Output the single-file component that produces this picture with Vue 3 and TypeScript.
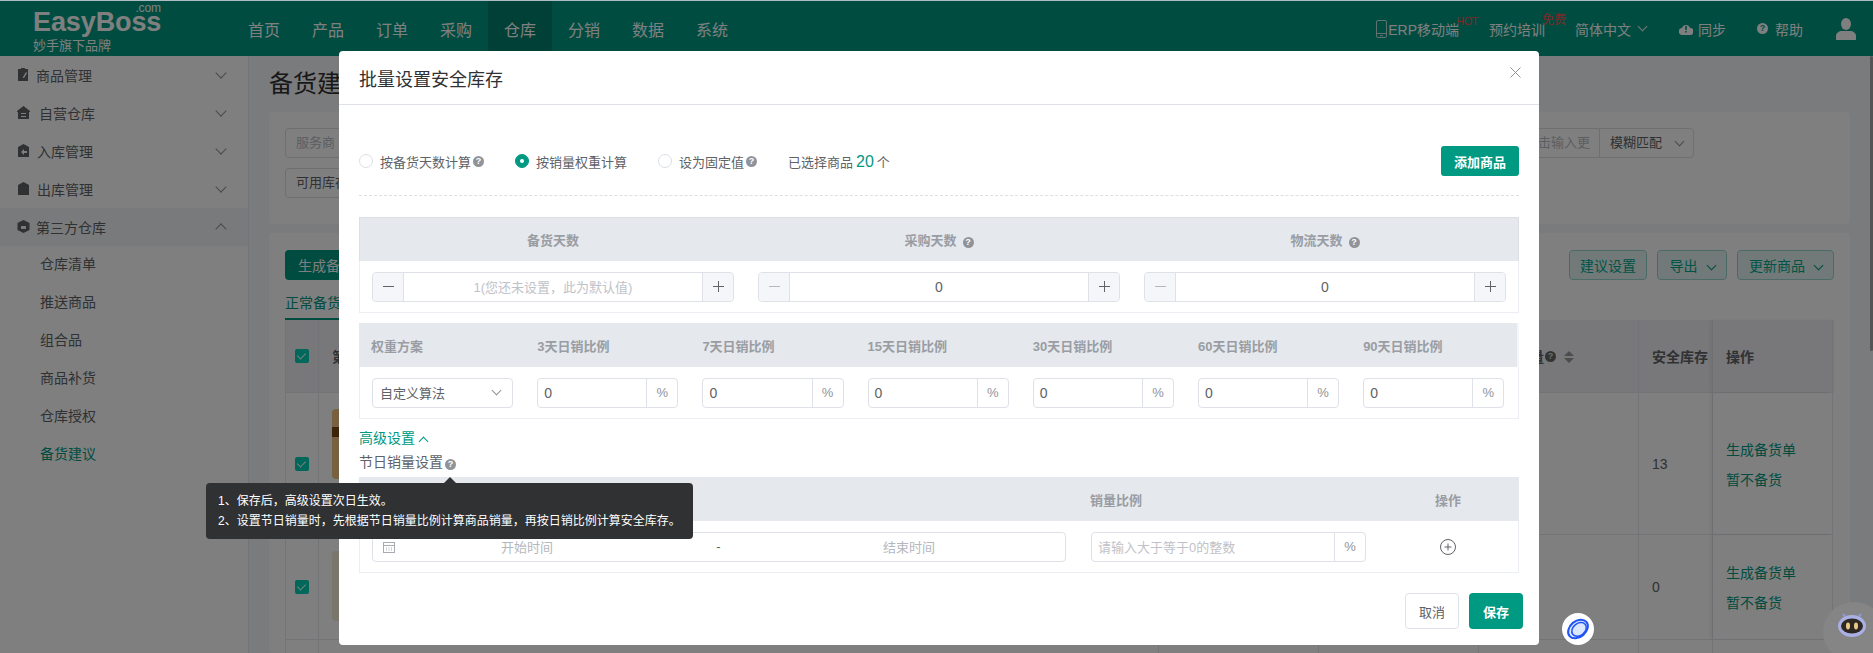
<template>
  <div class="page">
    <!-- 顶部导航 -->
    <header class="topbar">
      <div class="logo">
        <div class="logo-name">EasyBoss<span class="logo-com">.com</span></div>
        <div class="logo-sub">妙手旗下品牌</div>
      </div>
      <nav class="nav">
        <a v-for="item in navItems" :key="item" :class="['nav-item', { active: item === '仓库' }]">{{ item }}</a>
      </nav>
      <div class="top-right">
        <span class="top-link erp">
          <svg width="11" height="18" viewBox="0 0 11 18" fill="none" stroke="currentColor" stroke-opacity="0.75">
            <rect x="0.5" y="0.5" width="10" height="17" rx="1.5" />
            <path d="M1 13.5h9M4 15.7h3" />
          </svg>
          <span>ERP移动端</span>
          <i class="tag hot">HOT</i>
        </span>
        <span class="top-link train">预约培训<i class="tag free">免费</i></span>
        <span class="top-link lang">简体中文<span class="chev light"></span></span>
        <span class="top-link sync">
          <svg width="14" height="12" viewBox="0 0 14 12">
            <path fill="currentColor" d="M3.5 12A3.5 3.5 0 0 1 3 5a4.2 4.2 0 0 1 8 0 3.5 3.5 0 0 1 0 7z" />
            <path fill="#00997f" d="M6.2 3h1.6v4H6.2zM6.2 8h1.6v1.6H6.2z" />
          </svg>
          同步
        </span>
        <span class="top-link help">
          <i class="round-hint">?</i>
          帮助
        </span>
        <svg class="avatar" width="20" height="22" viewBox="0 0 20 22">
          <ellipse cx="10" cy="6" rx="5" ry="6" fill="currentColor" />
          <path fill="currentColor" d="M0 22v-4c0-3 3-5 6-5h8c3 0 6 2 6 5v4z" />
        </svg>
      </div>
    </header>

    <div class="layout">
      <!-- 左侧菜单 -->
      <aside class="sidebar">
        <div v-for="menu in menus" :key="menu.name" :class="['menu-row', { open: menu.open }]">
          <svg class="menu-icon" width="13" height="13" viewBox="0 0 13 13">
            <path fill="currentColor" :d="menu.icon" />
          </svg>
          <span :style="{ marginLeft: menu.offset + 'px' }">{{ menu.name }}</span>
          <span :class="['chev', 'menu-chev', { up: menu.open }]"></span>
        </div>
        <div v-for="sub in subMenus" :key="sub" :class="['sub-row', { current: sub === '备货建议' }]">{{ sub }}</div>
      </aside>

      <!-- 背后的备货建议页面 -->
      <main class="main">
        <h1 class="page-title">备货建议</h1>
        <section class="card filter-card">
          <div class="filter-row">
            <div class="fake-input provider">服务商</div>
            <div class="fake-input keyword">双击输入更</div>
            <div class="fake-input match">模糊匹配<span class="chev"></span></div>
          </div>
          <div class="filter-row">
            <div class="fake-input stock">可用库存</div>
          </div>
        </section>
        <section class="card list-card">
          <div class="toolbar">
            <button class="btn-primary-dark">生成备货单</button>
            <div class="toolbar-right">
              <button class="btn-plain w78">建议设置</button>
              <button class="btn-plain w70">导出<span class="chev green"></span></button>
              <button class="btn-plain w97">更新商品<span class="chev green"></span></button>
            </div>
          </div>
          <div class="tabs"><span class="tab">正常备货</span></div>
          <div class="grid-head grid-row">
            <div class="cell"><span class="check"></span></div>
            <div class="cell">第三方</div>
            <div class="cell"></div>
            <div class="cell"></div>
            <div class="cell end">销量<i class="round-hint dark">?</i><span class="sort"></span></div>
            <div class="cell nowrap">安全库存<span class="sort"></span></div>
            <div class="cell action">操作</div>
          </div>
          <div v-for="row in stockRows" :key="row.safe" class="grid-row body-row" :style="{ height: row.height + 'px' }">
            <div class="cell"><span class="check"></span></div>
            <div class="cell product">
              <div :class="['thumb', row.thumb]"></div>
            </div>
            <div class="cell"></div>
            <div class="cell"></div>
            <div class="cell"></div>
            <div class="cell">{{ row.safe }}</div>
            <div class="cell action links">
              <a>生成备货单</a>
              <a>暂不备货</a>
            </div>
          </div>
          <div class="grid-row body-row">
            <div class="cell" v-for="n in 7" :key="n"></div>
          </div>
        </section>
      </main>
    </div>

    <div class="scroll-thumb"></div>

    <!-- 批量设置弹窗 -->
    <div class="overlay">
      <div class="dialog">
        <div class="dialog-header">
          <span>批量设置安全库存</span>
          <svg class="close" width="11" height="11" viewBox="0 0 11 11" fill="none" stroke="currentColor">
            <path d="M.5.5l10 10M10.5.5l-10 10" />
          </svg>
        </div>

        <div class="dialog-body">
          <div class="mode-row">
            <label v-for="mode in modes" :key="mode.label" class="radio">
              <span :class="['radio-dot', { checked: mode.label === currentMode }]"></span>
              <span class="radio-text">{{ mode.label }}</span>
              <i v-if="mode.hint" class="hint">?</i>
            </label>
            <span class="selected">已选择商品<em>20</em>个</span>
            <button class="btn-primary add-btn">添加商品</button>
          </div>

          <div class="block days-block">
            <div class="block-head days-grid">
              <div v-for="col in dayCols" :key="col.title" class="head-cell center">
                {{ col.title }}<i v-if="col.hint" class="hint spaced">?</i>
              </div>
            </div>
            <div class="block-row days-grid">
              <div v-for="col in dayCols" :key="col.title" class="body-cell">
                <div class="stepper">
                  <span :class="['step', { muted: col.muted }]">
                    <svg width="11" height="11" viewBox="0 0 11 11" stroke="currentColor"><path d="M0 5.5h11" /></svg>
                  </span>
                  <span :class="['step-value', { placeholder: col.placeholder }]">{{ col.value }}</span>
                  <span class="step">
                    <svg width="11" height="11" viewBox="0 0 11 11" stroke="currentColor"><path d="M0 5.5h11M5.5 0v11" /></svg>
                  </span>
                </div>
              </div>
            </div>
          </div>

          <div class="block ratio-block">
            <div class="block-head ratio-grid ratio-head">
              <div v-for="col in ratioCols" :key="col" class="head-cell">{{ col }}</div>
            </div>
            <div class="block-row ratio-grid">
              <div class="body-cell">
                <div class="select">自定义算法<span class="chev"></span></div>
              </div>
              <div v-for="col in ratioCols.slice(1)" :key="col" class="body-cell">
                <div class="percent-input">
                  <span class="percent-value">0</span>
                  <span class="percent-unit">%</span>
                </div>
              </div>
            </div>
          </div>

          <div class="advanced">高级设置<span class="chev up primary"></span></div>

          <div class="festival-title">
            节日销量设置<i class="hint">?</i>
            <div class="tooltip">
              <p>1、保存后，高级设置次日生效。</p>
              <p>2、设置节日销量时，先根据节日销量比例计算商品销量，再按日销比例计算安全库存。</p>
            </div>
          </div>

          <div class="block">
            <div class="block-head festival-grid">
              <div class="head-cell first"></div>
              <div class="head-cell">销量比例</div>
              <div class="head-cell center op">操作</div>
            </div>
            <div class="block-row festival-grid">
              <div class="body-cell first">
                <div class="date-range">
                  <svg width="12" height="12" viewBox="0 0 12 12" fill="none" stroke="currentColor">
                    <rect x="0.5" y="1.5" width="11" height="10" />
                    <path d="M.5 4.5h11M3 7h1M5.5 7h1M8 7h1M3 9h1M5.5 9h1M8 9h1" />
                  </svg>
                  <span class="date-field">开始时间</span>
                  <span class="date-sep">-</span>
                  <span class="date-field end-field">结束时间</span>
                </div>
              </div>
              <div class="body-cell flat">
                <div class="percent-input">
                  <span class="percent-value placeholder">请输入大于等于0的整数</span>
                  <span class="percent-unit">%</span>
                </div>
              </div>
              <div class="body-cell center op">
                <svg width="16" height="16" viewBox="0 0 16 16" fill="none" stroke="#606266">
                  <circle cx="8" cy="8" r="7.5" />
                  <path d="M8 4.5v7M4.5 8h7" />
                </svg>
              </div>
            </div>
          </div>
        </div>

        <div class="dialog-footer">
          <button class="btn-cancel">取消</button>
          <button class="btn-primary save-btn">保存</button>
        </div>
      </div>

      <!-- 悬浮按钮 -->
      <div class="float-logo">
        <svg width="24" height="24" viewBox="0 0 24 24" fill="#dbe6ff" stroke="#1f54f5" stroke-width="2">
          <ellipse cx="12" cy="12" rx="11" ry="8" transform="rotate(-40 12 12)" />
          <ellipse cx="12.5" cy="13" rx="8" ry="6" transform="rotate(-40 12 12)" fill="none" stroke-width="1.5" />
        </svg>
      </div>
      <div class="float-bot">
        <svg width="30" height="24" viewBox="0 0 30 24">
          <circle cx="7" cy="2" r="1.5" fill="#8f97d8" />
          <circle cx="23" cy="2" r="1.5" fill="#8f97d8" />
          <ellipse cx="15" cy="13" rx="14" ry="11" fill="#aab0e4" />
          <ellipse cx="15" cy="13" rx="11" ry="7.5" fill="#2f2822" />
          <ellipse cx="11" cy="13" rx="2" ry="3.4" fill="#e8c98a" />
          <ellipse cx="19" cy="13" rx="2" ry="3.4" fill="#e8c98a" />
        </svg>
      </div>
    </div>
  </div>
</template>

<script setup lang="ts">
interface DayCol {
  title: string
  value: string
  hint?: boolean
  muted?: boolean
  placeholder?: boolean
}

const navItems = ['首页', '产品', '订单', '采购', '仓库', '分销', '数据', '系统']

const menus = [
  { name: '商品管理', offset: 0, open: false, icon: 'M1 1h3V0h4v1h3v12H1zM7 10l3-5-1-1-3 5v1z' },
  { name: '自营仓库', offset: 3, open: false, icon: 'M6.5 0L13 5v1h-1v7H1V6H0V5zM4 7v1h5V7zM4 10v1h5v-1z' },
  { name: '入库管理', offset: 1, open: false, icon: 'M6.5 0L12 3v10H1V3zM7 5L4 8l3 3V9h3V7H7z' },
  { name: '出库管理', offset: 1, open: false, icon: 'M6.5 0L12 3v10H1V3zM6 5l3 3-3 3V9H3V7h3z' },
  { name: '第三方仓库', offset: 0, open: true, icon: 'M6.5 0L12.5 3v7l-6 3-6-3V3zM4 6v3h5V6z' }
]

const subMenus = ['仓库清单', '推送商品', '组合品', '商品补货', '仓库授权', '备货建议']

const stockRows = [
  { safe: '13', height: 142, thumb: 'wood' },
  { safe: '0', height: 105, thumb: 'pale' }
]

const currentMode = '按销量权重计算'
const modes = [
  { label: '按备货天数计算', hint: true },
  { label: '按销量权重计算', hint: false },
  { label: '设为固定值', hint: true }
]

const dayCols: DayCol[] = [
  { title: '备货天数', value: '1(您还未设置，此为默认值)', placeholder: true },
  { title: '采购天数', value: '0', hint: true, muted: true },
  { title: '物流天数', value: '0', hint: true, muted: true }
]

const ratioCols = ['权重方案', '3天日销比例', '7天日销比例', '15天日销比例', '30天日销比例', '60天日销比例', '90天日销比例']
</script>

<style>
html,
body {
  margin: 0;
  background: #f6f7f9;
}
</style>

<style scoped>
.page {
  position: relative;
  width: 1873px;
  height: 653px;
  overflow: hidden;
  background: #f5f6f8;
  font-family: "Liberation Sans", "Noto Sans CJK SC", sans-serif;
  font-size: 14px;
  color: #606266;
}

p {
  margin: 0;
}

i,
em {
  font-style: normal;
}

button {
  font-family: inherit;
  cursor: pointer;
}

.chev {
  display: inline-block;
  width: 6px;
  height: 6px;
  border-right: 1px solid #909399;
  border-bottom: 1px solid #909399;
  transform: translateY(-2px) rotate(45deg);
}

.chev.up {
  transform: translateY(2px) rotate(225deg);
}

.chev.light {
  border-color: #e8f3f1;
  margin-left: 8px;
}

.chev.green {
  border-color: #00997f;
  margin-left: 10px;
}

.chev.primary {
  border-color: #009982;
  margin-left: 5px;
}

/* 顶部导航 */
.topbar {
  display: flex;
  align-items: center;
  height: 56px;
  box-sizing: border-box;
  border-top: 1px solid #aebcc4;
  background: #009982;
  color: #fff;
}

.logo {
  width: 248px;
  box-sizing: border-box;
  padding: 4px 0 0 33px;
  flex: none;
}

.logo-name {
  position: relative;
  width: 129px;
  font-size: 27px;
  line-height: 30px;
  font-weight: 700;
  letter-spacing: -0.1px;
  color: #fff;
}

.logo-com {
  position: absolute;
  right: 1px;
  top: -5px;
  font-size: 12px;
  line-height: 12px;
  font-weight: 400;
}

.logo-sub {
  font-size: 13px;
  line-height: 16px;
  margin-top: 1px;
}

.nav {
  display: flex;
  height: 100%;
}

.nav-item {
  display: flex;
  align-items: center;
  padding: 0 16px;
  margin-left: -16px;
  margin-right: 16px;
  font-size: 16px;
}

.nav-item.active {
  background: #00806d;
}

.top-right {
  display: flex;
  align-items: center;
  margin-left: auto;
  padding-right: 17px;
}

.top-link {
  position: relative;
  display: inline-flex;
  align-items: center;
}

.erp {
  gap: 1px;
  margin-right: 30px;
}

.train {
  margin-right: 30px;
}

.lang {
  margin-right: 33px;
}

.sync {
  gap: 5px;
  margin-right: 31px;
}

.help {
  gap: 7px;
  margin-right: 33px;
}

.tag {
  position: absolute;
  color: #ff4d4f;
  font-size: 12px;
  line-height: 12px;
}

.hot {
  right: -19px;
  top: -4px;
  font-size: 11px;
  letter-spacing: -0.5px;
}

.free {
  right: -21px;
  top: -5px;
}

.round-hint {
  display: inline-block;
  width: 11px;
  height: 11px;
  line-height: 11px;
  border-radius: 50%;
  background: #fff;
  color: #00997f;
  text-align: center;
  font-size: 9px;
  font-weight: 700;
}

.round-hint.dark {
  background: #666;
  color: #ddd;
  margin-left: 1px;
}

.avatar {
  color: #fff;
}

/* 左侧菜单 */
.layout {
  display: flex;
  height: 597px;
}

.sidebar {
  width: 248px;
  flex: none;
  background: #fff;
  border-right: 1px solid #e6e8ee;
}

.menu-row {
  display: flex;
  align-items: center;
  height: 38px;
  box-sizing: border-box;
  padding: 0 0 1px 17px;
  color: #606266;
}

.menu-row.open {
  background: #f3f4f7;
}

.menu-icon {
  margin-right: 6px;
  color: #606266;
}

.menu-chev {
  margin-left: auto;
  margin-right: 23px;
  width: 7px;
  height: 7px;
}

.sub-row {
  height: 38px;
  line-height: 37px;
  padding-left: 40px;
}

.sub-row.current {
  color: #009982;
}

/* 背后页面 */
.main {
  flex: 1;
  min-width: 0;
  padding: 0 23px 0 20px;
}

.page-title {
  margin: 0;
  height: 56px;
  line-height: 56px;
  font-size: 24px;
  font-weight: 400;
  color: #303133;
}

.card {
  background: #fff;
  border-radius: 4px;
  padding: 16px;
}

.filter-card {
  height: 112px;
  box-sizing: border-box;
  margin-bottom: 9px;
}

.filter-row {
  display: flex;
  margin-bottom: 10px;
}

.fake-input {
  height: 30px;
  box-sizing: border-box;
  border: 1px solid #dcdfe6;
  line-height: 28px;
  padding: 0 10px;
  border-radius: 4px;
  font-size: 13px;
  color: #b8bcc4;
}

.provider {
  width: 200px;
}

.stock {
  width: 200px;
  color: #606266;
}

.keyword {
  width: 160px;
  margin-left: auto;
  padding: 0 0 0 85px;
  border-radius: 4px 0 0 4px;
  border-right: 0;
  white-space: nowrap;
}

.match {
  display: flex;
  align-items: center;
  justify-content: space-between;
  width: 95px;
  margin-right: 140px;
  border-radius: 0 4px 4px 0;
  color: #606266;
}

.list-card {
  padding-top: 17px;
  padding-bottom: 0;
  height: 420px;
  box-sizing: border-box;
}

.toolbar {
  display: flex;
  justify-content: space-between;
  height: 30px;
  margin-bottom: 12px;
}

.toolbar-right {
  display: flex;
  gap: 10px;
}

.btn-primary-dark {
  width: 96px;
  height: 30px;
  border: 0;
  border-radius: 4px;
  background: #009982;
  color: #fff;
  font-size: 14px;
}

.btn-plain {
  height: 30px;
  border: 1px solid #99d6cd;
  border-radius: 4px;
  background: #e2f4f1;
  color: #00a88f;
  font-size: 14px;
  padding: 0;
}

.w78 {
  width: 78px;
}

.w70 {
  width: 70px;
}

.w97 {
  width: 97px;
}

.tabs {
  height: 28px;
}

.tab {
  display: inline-block;
  width: 70px;
  height: 28px;
  box-sizing: border-box;
  border-bottom: 2px solid #009982;
  color: #009982;
  line-height: 22px;
}

.grid-row {
  display: grid;
  grid-template-columns: 33px 840px 160px 160px 160px 74px 120px;
  border-bottom: 1px solid #e6e8ee;
  border-left: 1px solid #e6e8ee;
}

.grid-head {
  height: 73px;
  box-sizing: border-box;
  background: #f0f1f5;
  font-weight: 700;
  color: #606266;
}

.grid-head .cell {
  display: flex;
  align-items: center;
}

.body-row {
  box-sizing: border-box;
}

.body-row:last-child {
  height: 40px;
}

.cell {
  position: relative;
  box-sizing: border-box;
  border-right: 1px solid #e6e8ee;
  padding: 0 13px;
  display: flex;
  align-items: center;
  min-width: 0;
  white-space: nowrap;
}

.cell:first-child {
  padding: 0 0 0 9px;
}

.cell.end {
  justify-content: flex-end;
  padding-right: 64px;
}

.cell.nowrap {
  overflow: hidden;
  padding-right: 0;
}

.cell.action {
  box-shadow: -3px 0 4px rgba(0, 0, 0, 0.06);
}

.sort {
  display: inline-block;
  flex: none;
  width: 0;
  height: 0;
  margin-left: 8px;
  border-left: 5px solid transparent;
  border-right: 5px solid transparent;
  border-bottom: 5px solid #999;
  position: relative;
  top: -3px;
}

.sort::after {
  content: "";
  position: absolute;
  left: -5px;
  top: 7px;
  border-left: 5px solid transparent;
  border-right: 5px solid transparent;
  border-top: 5px solid #999;
}

.check {
  position: relative;
  display: block;
  width: 14px;
  height: 14px;
  border-radius: 2px;
  background: #00d0b4;
}

.check::after {
  content: "";
  position: absolute;
  left: 4px;
  top: 2px;
  width: 4px;
  height: 7px;
  border-right: 1px solid #fff;
  border-bottom: 1px solid #fff;
  transform: rotate(45deg);
}

.product {
  align-items: flex-start;
  padding-top: 16px;
}

.thumb {
  width: 70px;
  height: 70px;
  flex: none;
  border-radius: 4px;
}

.wood {
  background: linear-gradient(#eec27f 0 26%, #7d4a12 26% 40%, #eec27f 40%);
}

.pale {
  background: #f4ecd8;
}

.links {
  flex-direction: column;
  align-items: flex-start;
  justify-content: center;
  gap: 10px;
  color: #009982;
}

.scroll-thumb {
  position: absolute;
  right: 0;
  top: 56px;
  width: 3px;
  height: 295px;
  background: #aaa;
  border-radius: 2px;
}

/* 弹窗 */
.overlay {
  position: absolute;
  inset: 1px 0 0 0;
  background: rgba(0, 0, 0, 0.5);
}

.dialog {
  width: 1200px;
  margin: 50px 0 0 339px;
  background: #fff;
  border-radius: 4px;
  color: #606266;
  font-size: 13px;
}

.dialog-header {
  display: flex;
  align-items: center;
  justify-content: space-between;
  height: 54px;
  box-sizing: border-box;
  padding: 0 18px 0 20px;
  border-bottom: 1px solid #dfe1e8;
  font-size: 18px;
  color: #303133;
}

.close {
  color: #909399;
  margin-top: -10px;
}

.dialog-body {
  padding: 41px 20px 0;
}

.mode-row {
  display: flex;
  align-items: center;
  height: 30px;
  padding-bottom: 19px;
  border-bottom: 1px dashed #dcdfe6;
  box-sizing: content-box;
}

.radio {
  display: inline-flex;
  align-items: center;
  margin-right: 31px;
}

.radio-dot {
  position: relative;
  width: 14px;
  height: 14px;
  box-sizing: border-box;
  border: 1px solid #dcdfe6;
  border-radius: 50%;
  margin-right: 7px;
}

.radio-dot.checked {
  background: #009982;
  border-color: #009982;
}

.radio-dot.checked::after {
  content: "";
  position: absolute;
  left: 4px;
  top: 4px;
  width: 4px;
  height: 4px;
  border-radius: 50%;
  background: #fff;
}

.hint {
  display: inline-block;
  width: 11px;
  height: 11px;
  margin-left: 2px;
  line-height: 11px;
  border-radius: 50%;
  background: #909399;
  color: #fff;
  font-size: 9px;
  font-weight: 700;
  text-align: center;
  vertical-align: 0;
}

.hint.spaced {
  margin-left: 6px;
}

.selected em {
  margin: 0 3px;
  color: #009982;
  font-size: 16px;
}

.btn-primary {
  border: 0;
  border-radius: 3px;
  background: #009982;
  color: #fff;
  font-size: 13px;
  font-weight: 700;
}

.add-btn {
  width: 78px;
  height: 30px;
  margin-left: auto;
}

.block {
  border: 1px solid #ebeef2;
  border-top: 0;
  margin-top: 10px;
}

.days-block {
  margin-top: 21px;
}

.block-head {
  height: 44px;
  background: #e5e8ed;
  margin: 0 -1px;
  align-items: center;
  font-weight: 700;
  color: #999da3;
}

.days-block .block-head {
  border: 1px solid #dcdfe6;
  border-bottom: 0;
  box-sizing: border-box;
}

.ratio-head {
  border-right: 2px solid #f5f6f9;
  box-sizing: border-box;
}

.block-row {
  height: 51px;
  align-items: center;
}

.days-grid {
  display: grid;
  grid-template-columns: repeat(3, 1fr);
}

.ratio-grid {
  display: grid;
  grid-template-columns: repeat(7, 165.2px);
}

.festival-grid {
  display: grid;
  grid-template-columns: 731px 275px 1fr;
}

.head-cell {
  padding: 0 12px;
}

.ratio-head .head-cell + .head-cell {
  padding-left: 13px;
}

.center {
  text-align: center;
}

.body-cell {
  padding: 0 12px;
}

.festival-grid .first {
  padding: 0 25px 0 12px;
}

.festival-grid .head-cell:nth-child(2),
.body-cell.flat {
  padding: 0;
}

.festival-grid .op {
  padding-left: 24px;
}

.body-cell.center {
  display: flex;
  justify-content: center;
}

.stepper,
.select,
.percent-input,
.date-range {
  display: flex;
  align-items: center;
  height: 30px;
  box-sizing: border-box;
  border: 1px solid #dfe1e8;
  border-radius: 4px;
}

.step {
  display: flex;
  align-items: center;
  justify-content: center;
  width: 31px;
  height: 100%;
  flex: none;
  box-sizing: border-box;
  background: #f5f6f9;
  color: #606266;
}

.step:first-child {
  border-right: 1px solid #dfe1e8;
  border-radius: 4px 0 0 4px;
}

.step:last-child {
  border-left: 1px solid #dfe1e8;
  border-radius: 0 4px 4px 0;
}

.step.muted {
  color: #b4b7bd;
}

.step-value {
  flex: 1;
  text-align: center;
  font-size: 14px;
}

.step-value.placeholder {
  font-size: 13px;
}

.placeholder {
  color: #bfc2c9;
}

.select {
  justify-content: space-between;
  padding: 0 12px 0 7px;
}

.percent-input {
  justify-content: space-between;
}

.percent-value {
  padding-left: 6px;
  font-size: 14px;
}

.percent-value.placeholder {
  font-size: 13px;
}

.percent-unit {
  width: 31px;
  height: 100%;
  flex: none;
  box-sizing: border-box;
  border-left: 1px solid #dfe1e8;
  text-align: center;
  line-height: 28px;
  color: #909399;
}

.advanced {
  margin-top: 9px;
  line-height: 20px;
  color: #009982;
  font-size: 14px;
}

.festival-title {
  position: relative;
  margin-top: 5px;
  line-height: 19px;
  height: 20px;
  font-size: 14px;
}

.tooltip {
  position: absolute;
  left: -153px;
  top: 30px;
  z-index: 5;
  width: 487px;
  box-sizing: border-box;
  padding: 8px 12px;
  background: #303133;
  border-radius: 4px;
  color: #fff;
  font-size: 12px;
  line-height: 20px;
  white-space: nowrap;
}

.tooltip::before {
  content: "";
  position: absolute;
  left: 238px;
  top: -6px;
  border-left: 6px solid transparent;
  border-right: 6px solid transparent;
  border-bottom: 6px solid #303133;
}

.festival-title + .block {
  margin-top: 4px;
}

.date-range {
  padding-left: 10px;
  color: #b4b7bd;
}

.date-range svg {
  flex: none;
  color: #a8abb2;
}

.date-field {
  width: 262px;
  padding-left: 2px;
  flex: none;
  text-align: center;
  box-sizing: border-box;
}

.date-sep {
  flex: 1;
  text-align: center;
  padding-left: 3px;
  color: #606266;
}

.end-field {
  margin-right: 26px;
}

.dialog-footer {
  display: flex;
  justify-content: flex-end;
  gap: 10px;
  padding: 20px 16px 16px 0;
}

.btn-cancel,
.save-btn {
  width: 54px;
  height: 36px;
  border-radius: 4px;
  font-size: 13px;
}

.btn-cancel {
  background: #fff;
  border: 1px solid #dfe1e8;
  color: #606266;
}

.float-logo {
  position: absolute;
  left: 1562px;
  top: 612px;
  display: flex;
  align-items: center;
  justify-content: center;
  width: 32px;
  height: 32px;
  border-radius: 50%;
  background: #fff;
}

.float-bot {
  position: absolute;
  right: -12px;
  top: 601px;
  display: flex;
  align-items: flex-start;
  padding: 11px 0 0 14px;
  width: 62px;
  height: 60px;
  box-sizing: border-box;
  border-radius: 50%;
  background: #858585;
}
</style>
